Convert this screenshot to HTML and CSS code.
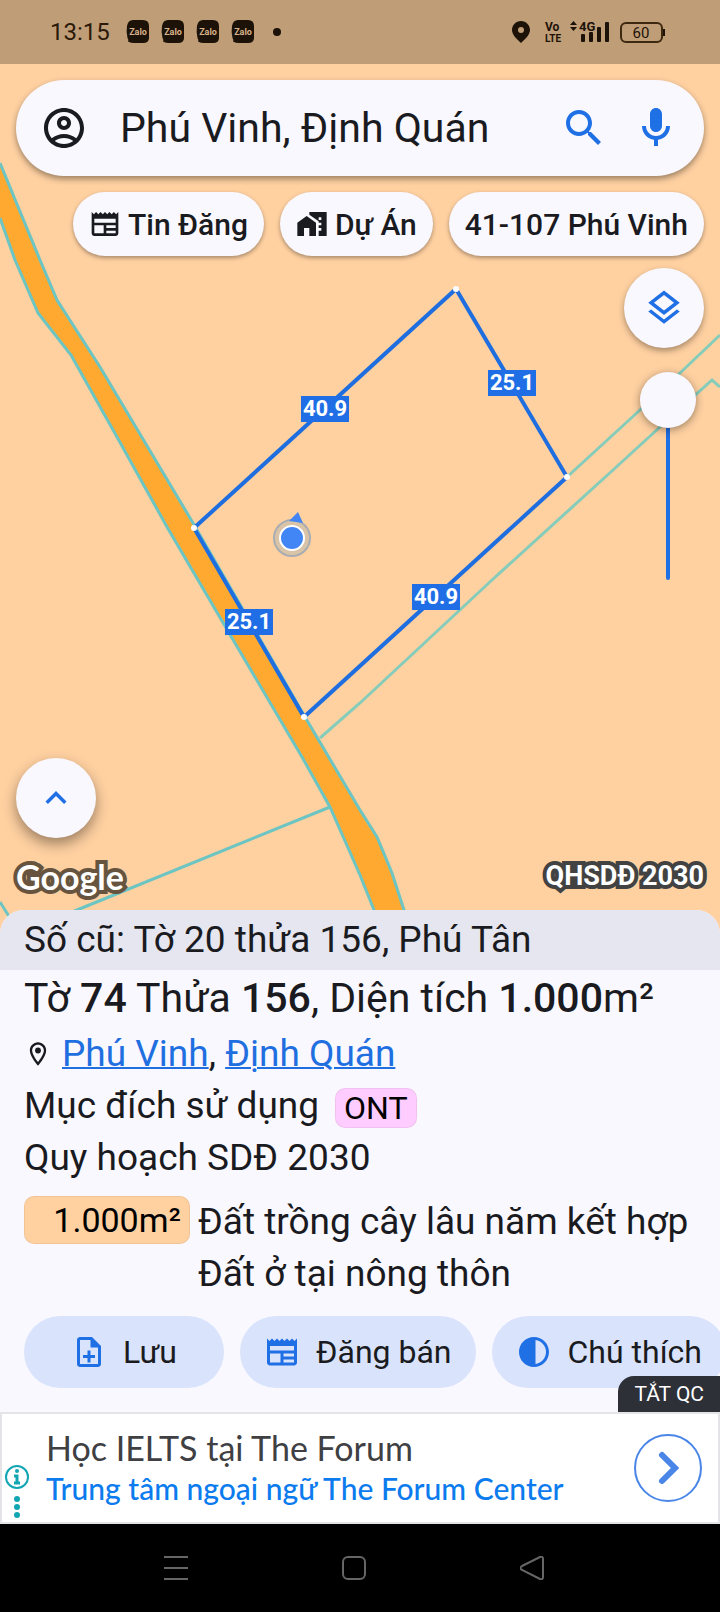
FILE: index.html
```html
<!DOCTYPE html>
<html lang="vi">
  <head>
    <meta charset="UTF-8" />
    <meta name="viewport" content="width=device-width,initial-scale=1.0" />
    <title>Phú Vinh, Định Quán</title>
    <link rel="stylesheet" href="styles.css">
  </head>
  <body>
    <!-- shared icons -->
    <svg class="defs" aria-hidden="true">
      <symbol id="zalo" viewBox="0 0 24 24">
        <path d="M7 0H17Q23 0 23 6V18Q23 23 17 23H8Q5 23 2 21.500Q3 20 1.500 18Q0 12 1 6Q2 0 7 0Z"/>
      </symbol>
      <symbol id="news" viewBox="0 0 24 24">
        <path d="M22 3l-1.670 1.670L18.670 3 17 4.670 15.330 3l-1.660 1.670L12 3l-1.670 1.670L8.670 3 7 4.670 5.330 3 3.670 4.670 2 3v16c0 1.100.900 2 2 2h16c1.100 0 2-.900 2-2V3zM11 19H4v-6h7v6zm9 0h-7v-2h7v2zm0-4h-7v-2h7v2zm0-4H4V8h16v3z"/>
      </symbol>
    </svg>

    <main class="map">
      <svg class="map-canvas" viewBox="0 0 720 934" preserveAspectRatio="xMidYMin slice" aria-hidden="true">
        <path class="road" d="M0 163L40 260L57 300L100 367L193 523L305 717L360 810L377 837L392 873L404 910L412 934H382L374 910L360 875L330 807L302 757L232 638L167 527L117 437L71 355L38 313L15 260L0 218Z"/>
        <g class="border">
          <path d="M0 163L40 260L57 300L100 367L193 523L305 717L360 810L377 837L392 873L404 910L412 934"/>
          <path d="M0 218L15 260L38 313L71 355L117 437L167 527L232 638L302 757L330 807L360 875L374 910L382 934"/>
          <path d="M330 807L77 910L20 934M0 902L10 918"/>
        </g>
        <g class="border light">
          <path d="M320 738L360 703L492 580L613 470L660 427L712 380L720 387"/>
          <path d="M567 477L640 410L680 373L720 335"/>
        </g>
        <path class="plot" d="M456 289L567 477L304 717L194 528Z"/>
        <g fill="#fff">
          <circle cx="456" cy="289" r="3"/>
          <circle cx="567" cy="477" r="3"/>
          <circle cx="304" cy="717" r="3"/>
          <circle cx="194" cy="528" r="3"/>
        </g>
        <g class="length">
          <rect x="301" y="396" width="48" height="26"/><text x="325" y="416">40.9</text>
          <rect x="488" y="370" width="48" height="26"/><text x="512" y="390">25.1</text>
          <rect x="412" y="584" width="48" height="26"/><text x="436" y="604">40.9</text>
          <rect x="225" y="609" width="48" height="26"/><text x="249" y="629">25.1</text>
        </g>
        <!-- my location -->
        <circle cx="292" cy="538" r="18" fill="#d9c4a8" stroke="#a9adb2" stroke-width="2"/>
        <path d="M289 521L298 512L303 523Z" fill="#4285f4"/>
        <circle cx="292" cy="538" r="12" fill="#4285f4" stroke="#fff" stroke-width="2"/>
      </svg>

      <header class="status">
        <span class="time">13:15</span>
        <div class="notices">
          <svg class="zalo" viewBox="0 0 24 24"><use href="#zalo"/><text x="12" y="15">Zalo</text></svg>
          <svg class="zalo" viewBox="0 0 24 24"><use href="#zalo"/><text x="12" y="15">Zalo</text></svg>
          <svg class="zalo" viewBox="0 0 24 24"><use href="#zalo"/><text x="12" y="15">Zalo</text></svg>
          <svg class="zalo" viewBox="0 0 24 24"><use href="#zalo"/><text x="12" y="15">Zalo</text></svg>
        </div>
        <span class="dot"></span>
        <svg class="system" viewBox="0 0 160 28">
          <path d="M11 3C6 3 2 7 2 12C2 17 7 21 11 25C15 21 20 17 20 12C20 7 16 3 11 3Z"/>
          <circle cx="11" cy="12" r="3" fill="#bf9d77"/>
          <g font-weight="700">
            <text x="35" y="13" font-size="12">Vo</text>
            <text x="35" y="24" font-size="10">LTE</text>
            <text x="69" y="13" font-size="13">4G</text>
          </g>
          <path d="M60 7L63.500 3L67 7ZM60 9L63.500 13L67 9Z"/>
          <g><rect x="71" y="16" width="4" height="8" rx="1"/><rect x="79" y="14" width="4" height="10" rx="1"/><rect x="87" y="9" width="4" height="15" rx="1"/><rect x="95" y="4" width="4" height="20" rx="1"/></g>
          <rect x="111" y="5" width="41" height="19" rx="5" fill="none" stroke="#3d2810" stroke-width="2"/>
          <rect x="153" y="11" width="2" height="7"/>
          <text x="131" y="20" font-size="15" text-anchor="middle">60</text>
        </svg>
      </header>

      <form class="search">
        <svg class="icon dark" viewBox="0 0 24 24"><path d="M12 2C6.480 2 2 6.480 2 12s4.480 10 10 10 10-4.480 10-10S17.520 2 12 2zM7.350 18.500C8.660 17.560 10.260 17 12 17s3.340.560 4.650 1.500C15.340 19.440 13.740 20 12 20s-3.340-.560-4.650-1.500zm10.790-1.380C16.450 15.800 14.320 15 12 15s-4.450.800-6.140 2.120C4.700 15.730 4 13.950 4 12c0-4.420 3.580-8 8-8s8 3.580 8 8c0 1.950-.700 3.730-1.860 5.120zM12 6c-1.930 0-3.500 1.570-3.500 3.500S10.070 13 12 13s3.500-1.570 3.500-3.500S13.930 6 12 6zm0 5c-.830 0-1.500-.670-1.500-1.500S11.170 8 12 8s1.500.670 1.500 1.500S12.830 11 12 11z"/></svg>
        <input type="text" name="place" value="Phú Vinh, Định Quán" aria-label="Tìm kiếm">
        <button type="submit" class="plain" aria-label="Tìm">
          <svg class="icon" viewBox="0 0 24 24"><path d="M15.500 14h-.790l-.280-.270C15.410 12.590 16 11.110 16 9.500 16 5.910 13.090 3 9.500 3S3 5.910 3 9.500 5.910 16 9.500 16c1.610 0 3.090-.590 4.230-1.570l.270.280v.790l5 4.990L20.490 19l-4.990-5zm-6 0C7.010 14 5 11.990 5 9.500S7.010 5 9.500 5 14 7.010 14 9.500 11.990 14 9.500 14z"/></svg>
        </button>
        <button type="button" class="plain" aria-label="Giọng nói">
          <svg class="icon" viewBox="0 0 24 24"><path d="M12 14c1.660 0 3-1.340 3-3V5c0-1.660-1.340-3-3-3S9 3.340 9 5v6c0 1.660 1.340 3 3 3zm5-3c0 2.760-2.240 5-5 5s-5-2.240-5-5H5c0 3.530 2.610 6.430 6 6.920V21h2v-3.080c3.390-.490 6-3.390 6-6.920h-2z"/></svg>
        </button>
      </form>

      <nav class="chips">
        <button type="button"><svg><use href="#news"/></svg>Tin Đăng</button>
        <button type="button"><svg viewBox="0 0 24 24"><path d="M1 11v10h5v-6h4v6h5V11L8 6zM10 3v1.970l7 5V11h2v2h-2v2h2v2h-2v4h6V3H10zm9 6h-2V7h2v2z"/></svg>Dự Án</button>
        <button type="button">41-107 Phú Vinh</button>
      </nav>

      <div class="controls">
        <button type="button" class="round" aria-label="Lớp bản đồ">
          <svg viewBox="0 0 24 24"><path d="M11.990 18.540l-7.370-5.730L3 14.070l9 7 9-7-1.630-1.270zM12 16l7.360-5.730L21 9l-9-7-9 7 1.630 1.270L12 16zm0-11.470L17.740 9 12 13.470 6.260 9 12 4.530z"/></svg>
        </button>
        <input type="range" class="opacity" min="0" max="100" value="0" aria-label="Độ mờ">
      </div>

      <div class="corner">
        <button type="button" class="round" aria-label="Mở rộng">
          <svg viewBox="0 0 24 24"><path d="M12 8l-6 6 1.410 1.410L12 10.830l4.590 4.580L18 14z"/></svg>
        </button>
        <div class="credits">
          <span class="google">Google</span>
          <span class="layer-name">QHSDĐ 2030</span>
        </div>
      </div>
    </main>

    <section class="sheet">
      <p class="old">Số cũ: Tờ 20 thửa 156, Phú Tân</p>
      <div class="details">
        <h1>Tờ <b>74</b> Thửa <b>156</b>, Diện tích <b>1.000</b>m²</h1>
        <p class="place">
          <svg viewBox="0 0 24 24"><path d="M12 2C8.130 2 5 5.130 5 9c0 5.250 7 13 7 13s7-7.750 7-13c0-3.870-3.130-7-7-7zM7 9c0-2.760 2.240-5 5-5s5 2.240 5 5c0 2.880-2.880 7.190-5 9.880C9.920 16.210 7 11.850 7 9z"/><circle cx="12" cy="9" r="2.500"/></svg>
          <span><a href="#">Phú Vinh</a>, <a href="#">Định Quán</a></span>
        </p>
        <p class="purpose">Mục đích sử dụng <span class="tag">ONT</span></p>
        <p>Quy hoạch SDĐ 2030</p>
        <div class="plan">
          <span class="area">1.000m²</span>
          <p>Đất trồng cây lâu năm kết hợp Đất ở tại nông thôn</p>
        </div>
      </div>
      <div class="actions">
        <button type="button"><svg viewBox="0 0 24 24"><path d="M13 11h-2v3H8v2h3v3h2v-3h3v-2h-3zm1-9H6c-1.100 0-2 .900-2 2v16c0 1.100.890 2 1.990 2H18c1.100 0 2-.900 2-2V8l-6-6zm4 18H6V4h7v5h5v11z"/></svg>Lưu</button>
        <button type="button"><svg><use href="#news"/></svg>Đăng bán</button>
        <button type="button"><svg viewBox="0 0 24 24"><path d="M12 22c5.520 0 10-4.480 10-10S17.520 2 12 2 2 6.480 2 12s4.480 10 10 10zm1-17.930c3.940.490 7 3.850 7 7.930s-3.050 7.440-7 7.930V4.070z"/></svg>Chú thích</button>
      </div>
      <button type="button" class="hide-ad">TẮT QC</button>
    </section>

    <aside class="ad">
      <svg class="ad-info" viewBox="0 0 28 56">
        <g fill="none" stroke="#12a5b4" stroke-width="2"><circle cx="15" cy="13" r="11"/><path d="M12 12H15V19M12 19H18" stroke-width="3"/></g>
        <g fill="#12a5b4"><circle cx="15" cy="7" r="2"/><circle cx="15" cy="35" r="3"/><circle cx="15" cy="43" r="3"/><circle cx="15" cy="51" r="3"/></g>
      </svg>
      <div class="ad-text">
        <p class="ad-title">Học IELTS tại The Forum</p>
        <a href="#">Trung tâm ngoại ngữ The Forum Center</a>
      </div>
      <button type="button" class="plain" aria-label="Mở quảng cáo">
        <svg viewBox="0 0 68 68"><g fill="none" stroke="#4a86e8"><circle cx="34" cy="34" r="33" stroke-width="2"/><path d="M28 21L41 34L28 47" stroke-width="6" stroke-linecap="round"/></g></svg>
      </button>
    </aside>

    <footer class="system-nav">
      <button type="button" class="plain" aria-label="Gần đây"><svg viewBox="0 0 24 24"><path d="M0 1H24M0 12H24M0 23H24"/></svg></button>
      <button type="button" class="plain" aria-label="Trang chủ"><svg viewBox="0 0 24 24"><rect x="1" y="1" width="22" height="22" rx="5"/></svg></button>
      <button type="button" class="plain" aria-label="Quay lại"><svg viewBox="0 0 24 24"><path d="M2 10L20 1Q23 0 23 3V21Q23 24 20 23L2 14Q-1 12 2 10Z"/></svg></button>
    </footer>
  </body>
</html>
```
FILE: styles.css
```css
* {
  box-sizing: border-box;
}
body {
  margin: 0;
  min-height: 100vh;
  display: flex;
  flex-direction: column;
  overflow-x: hidden;
  background: #000;
  color: #1a1b21;
  font-family: Roboto, "Noto Sans", sans-serif;
}
h1, p {
  margin: 0;
}
button, input {
  font: inherit;
  color: inherit;
  border: none;
  outline: none;
}
button {
  cursor: pointer;
}
svg {
  display: block;
  flex: none;
}
.defs {
  display: none;
}
.plain {
  background: none;
  padding: 0;
}

/* map */
.map {
  position: relative;
  flex: 1;
  display: flex;
  flex-direction: column;
  background: #ffd1a1;
}
.map-canvas {
  position: absolute;
  top: 0;
  left: 0;
  width: 100%;
  height: 100%;
}
.road {
  fill: #ffa930;
}
.border {
  fill: none;
  stroke: #6cc5c2;
  stroke-width: 3;
}
.light {
  stroke: #86ccbb;
}
.plot {
  fill: none;
  stroke: #1f6ee0;
  stroke-width: 4;
}
.length {
  fill: #1f6ee6;
  font-size: 22px;
  font-weight: 700;
}
.length text {
  fill: #fff;
  text-anchor: middle;
}

/* status bar */
.status {
  position: relative;
  height: 64px;
  padding: 0 50px;
  display: flex;
  align-items: center;
  background: #bf9d77;
  color: #2b1a09;
  fill: #1c1208;
}
.time {
  font-size: 24px;
}
.notices {
  display: flex;
  gap: 11px;
  margin-left: 16px;
}
.zalo {
  width: 24px;
  height: 24px;
}
.zalo text {
  fill: #d9b48a;
  font-size: 9px;
  font-weight: 700;
  text-anchor: middle;
}
.dot {
  width: 8px;
  height: 8px;
  margin-left: 18px;
  border-radius: 50%;
  background: #1c1208;
}
.system {
  width: 160px;
  height: 28px;
  margin-left: auto;
}

/* search */
.search {
  position: relative;
  display: flex;
  align-items: center;
  gap: 24px;
  height: 96px;
  margin: 16px 16px 0;
  padding: 0 24px;
  border-radius: 48px;
  background: #faf8ff;
  box-shadow: 0 3px 6px rgba(0, 0, 0, 0.4);
}
.search input {
  flex: 1;
  min-width: 0;
  padding: 0 8px;
  background: none;
  font-size: 41px;
}
.icon {
  width: 48px;
  height: 48px;
  fill: #1f6fe5;
}
.dark {
  fill: #1a1b21;
}
.chips {
  position: relative;
  display: flex;
  justify-content: flex-end;
  gap: 16px;
  margin: 16px 16px 0;
}
.chips button {
  display: flex;
  align-items: center;
  gap: 7px;
  height: 64px;
  padding: 0 16px;
  border-radius: 32px;
  background: #faf8ff;
  box-shadow: 0 2px 4px rgba(0, 0, 0, 0.35);
  font-size: 30px;
  font-weight: 500;
  white-space: nowrap;
}
.chips svg {
  width: 32px;
  height: 32px;
  fill: #1a1b21;
}

/* map controls */
.controls {
  position: relative;
  display: flex;
  flex-direction: column;
  align-items: flex-end;
  gap: 24px;
  padding: 12px 16px 0;
}
.round {
  display: flex;
  align-items: center;
  justify-content: center;
  width: 80px;
  height: 80px;
  padding: 0;
  border-radius: 50%;
  background: #faf8ff;
  box-shadow: 0 3px 6px rgba(0, 0, 0, 0.35);
}
.round svg {
  width: 42px;
  height: 42px;
  fill: #1f6fe5;
}
.opacity {
  appearance: none;
  writing-mode: vertical-lr;
  width: 56px;
  height: 208px;
  margin: 0 8px 0 0;
  background: none;
}
.opacity::-webkit-slider-runnable-track {
  width: 4px;
  height: 208px;
  border-radius: 2px;
  background: #1f6fe5;
}
.opacity::-webkit-slider-thumb {
  appearance: none;
  width: 56px;
  height: 56px;
  margin-left: -26px;
  border-radius: 50%;
  background: #faf8ff;
  box-shadow: 0 2px 8px rgba(0, 0, 0, 0.4);
}
.corner {
  position: relative;
  margin-top: auto;
  padding: 0 16px 28px;
}
.corner .round {
  box-shadow: 0 6px 14px rgba(0, 0, 0, 0.4);
}
.credits {
  display: flex;
  align-items: center;
  justify-content: space-between;
  height: 60px;
  margin-top: 8px;
  color: #fff;
}
.google, .layer-name {
  -webkit-text-stroke: 8px #424242;
  paint-order: stroke fill;
  stroke-linejoin: round;
}
.google {
  -webkit-text-stroke-color: #66543f;
  font-family: Lato, sans-serif;
  font-size: 34px;
  font-weight: 700;
}
.layer-name {
  font-size: 27px;
  font-weight: 700;
}

/* bottom sheet */
.sheet {
  position: relative;
  margin-top: -24px;
  padding-bottom: 24px;
  border-radius: 24px 24px 0 0;
  overflow: hidden;
  background: #faf8ff;
  font-size: 37px;
  line-height: 52px;
}
.old {
  padding: 4px 24px;
  background: #e6e6f0;
}
.details {
  padding: 0 24px;
}
h1 {
  margin-bottom: 2px;
  font-size: 41px;
  font-weight: 400;
  line-height: 56px;
}
h1 b {
  font-weight: 500;
}
.place {
  display: flex;
  align-items: center;
  gap: 10px;
}
.place svg {
  width: 28px;
  height: 28px;
  fill: #1a1b21;
}
.place a {
  color: #1f6fe0;
  text-decoration-thickness: 2px;
}
.purpose {
  display: flex;
  align-items: center;
  gap: 16px;
}
.tag, .area {
  border: 1px solid rgba(0, 0, 0, 0.06);
  border-radius: 10px;
  color: #000;
}
.tag {
  margin-top: 4px;
  padding: 0 8px;
  background: #ffccff;
  font-size: 32px;
  line-height: 38px;
}
.plan {
  display: flex;
  align-items: flex-start;
  gap: 8px;
  margin-top: 12px;
}
.area {
  flex: none;
  width: 166px;
  padding-right: 8px;
  background: #ffd1a1;
  font-size: 34px;
  line-height: 46px;
  text-align: right;
}
.actions {
  display: flex;
  gap: 16px;
  margin-top: 16px;
  padding-left: 24px;
}
.actions button {
  flex: none;
  display: flex;
  align-items: center;
  justify-content: center;
  gap: 16px;
  min-width: 200px;
  height: 72px;
  padding: 0 24px;
  border-radius: 36px;
  background: #d9e3fb;
  font-size: 32px;
}
.actions svg {
  width: 36px;
  height: 36px;
  fill: #1f6fe5;
}
.hide-ad {
  position: absolute;
  right: 0;
  bottom: 0;
  height: 36px;
  padding: 0 16px;
  border-radius: 16px 0 0 0;
  background: #2e3038;
  color: #fff;
  font-size: 21px;
  line-height: 36px;
}

/* ad */
.ad {
  display: flex;
  align-items: center;
  height: 112px;
  padding-right: 16px;
  border: 2px solid #e3e3e8;
  background: #fff;
}
.ad-info {
  width: 28px;
  height: 56px;
  align-self: flex-end;
  margin-bottom: 2px;
}
.ad-text {
  flex: 1;
  padding: 6px 0 0 16px;
  font-family: Lato, sans-serif;
  line-height: 40px;
  white-space: nowrap;
}
.ad-title {
  color: #3f4043;
  font-size: 34px;
}
.ad a {
  color: #0b7bee;
  font-size: 30px;
  font-weight: 500;
  text-decoration: none;
}
.ad button svg {
  width: 68px;
  height: 68px;
}

/* phone navigation */
.system-nav {
  display: flex;
  align-items: center;
  justify-content: center;
  gap: 154px;
  height: 88px;
  padding-right: 12px;
}
.system-nav svg {
  width: 24px;
  height: 24px;
  fill: none;
  stroke: #666;
  stroke-width: 2;
}
```
